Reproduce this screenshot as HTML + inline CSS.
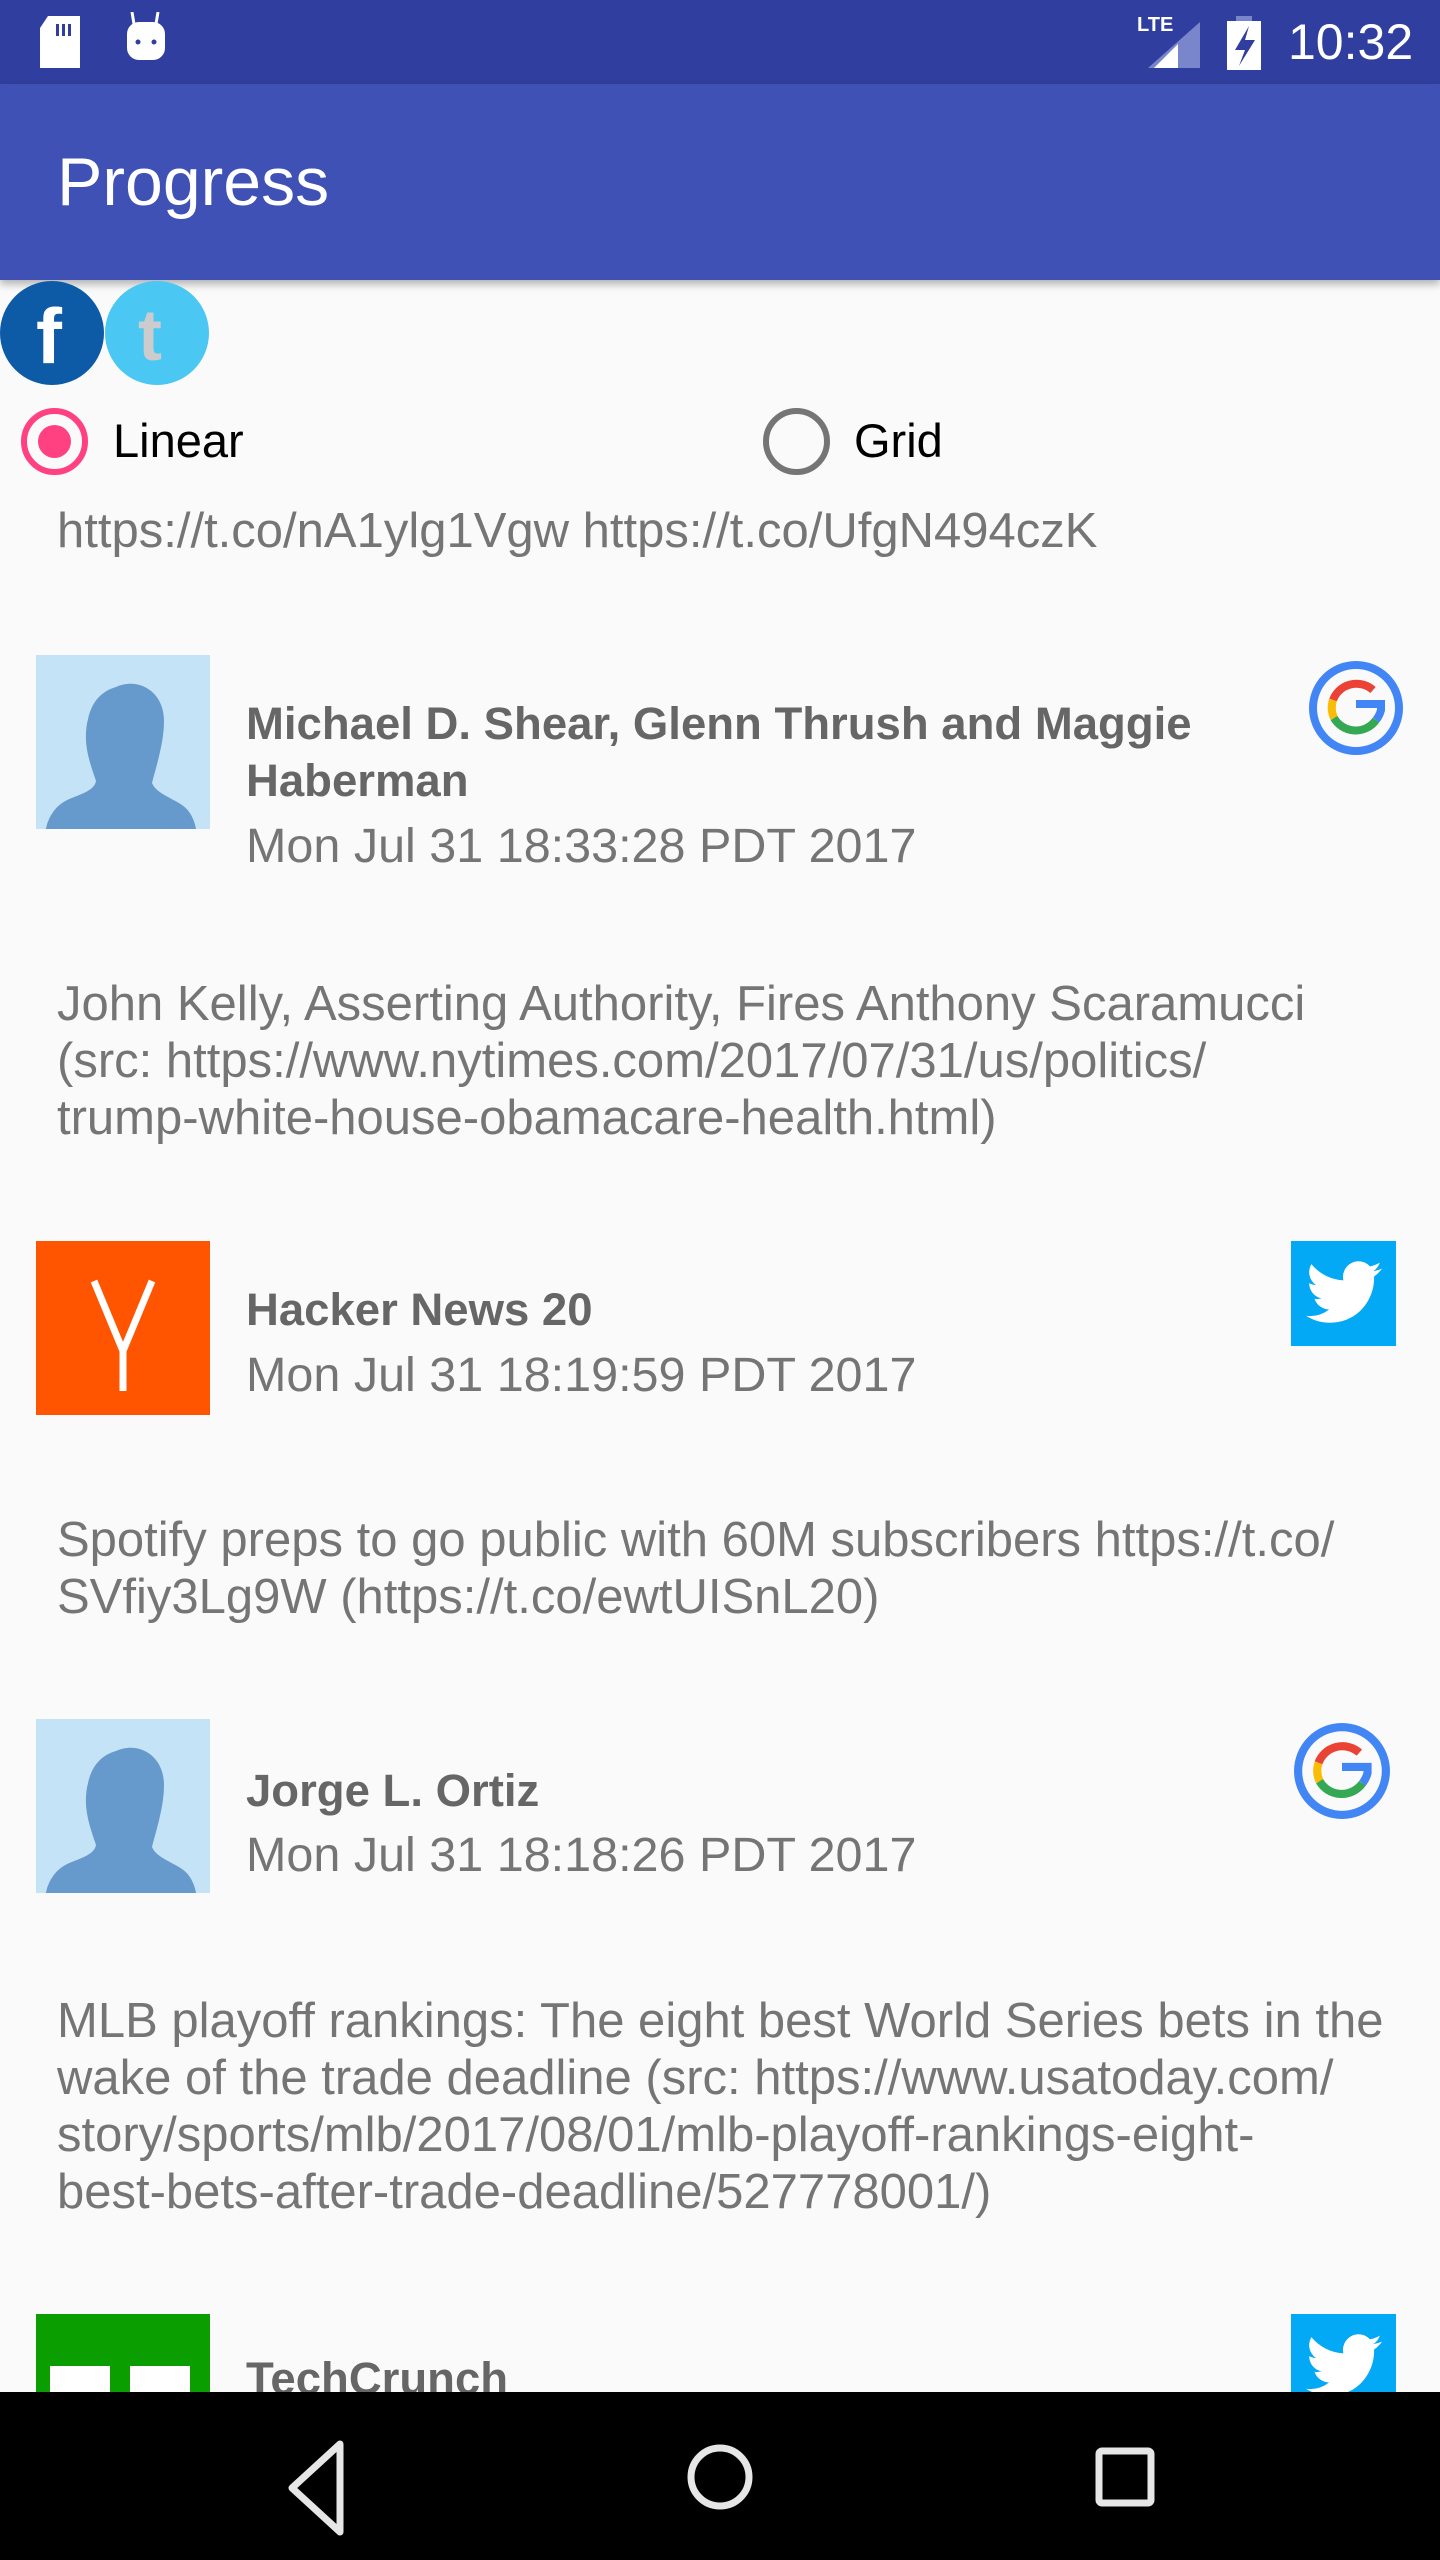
<!DOCTYPE html>
<html><head><meta charset="utf-8"><style>
*{margin:0;padding:0;box-sizing:border-box}
body{width:1440px;height:2560px;background:#fafafa;position:relative;overflow:hidden;font-family:"Liberation Sans",sans-serif}
.a{position:absolute;white-space:nowrap}
.t{font-size:49px;color:#757575;line-height:57px;left:57px}
.n{font-size:45.5px;color:#666;font-weight:bold;line-height:57px;left:246px}
.d{font-size:48.5px;color:#757575;line-height:57px;left:246px}
.av{position:absolute;left:36px;width:174px;height:174px}
.tw{position:absolute;left:1291px;width:105px;height:105px;background:#03a9f4}
</style></head><body>
<div class="a" style="left:0;top:0;width:1440px;height:84px;background:#303f9f"></div>
<div class="a" style="left:0;top:84px;width:1440px;height:196px;background:#3f51b5;box-shadow:0 4px 8px rgba(0,0,0,.3)"></div>
<svg class="a" style="left:40px;top:16px" width="45" height="52"><path d="M8 0h32v52H0V12z" fill="#fff"/><rect x="16" y="8" width="3" height="12" fill="#303f9f"/><rect x="22" y="8" width="3" height="12" fill="#303f9f"/><rect x="28" y="8" width="3" height="12" fill="#303f9f"/></svg>
<svg class="a" style="left:124px;top:12px" width="44" height="52"><line x1="8" y1="0" x2="10" y2="12" stroke="#fff" stroke-width="3"/><line x1="34" y1="0" x2="32" y2="12" stroke="#fff" stroke-width="3"/><rect x="3" y="10" width="38" height="38" rx="12" fill="#fff"/><circle cx="14" cy="30" r="2.5" fill="#303f9f"/><circle cx="30" cy="30" r="2.5" fill="#303f9f"/></svg>
<div class="a" style="left:1137px;top:14px;font-size:20px;color:#fff;font-weight:bold">LTE</div>
<svg class="a" style="left:1148px;top:22px" width="52" height="46"><path d="M52 0V46H0z" fill="#7986cb"/><path d="M30 22V46H6z" fill="#fff"/></svg>
<svg class="a" style="left:1227px;top:16px" width="34" height="54"><rect x="9" y="0" width="16" height="6" fill="#7986cb"/><rect x="0" y="5" width="34" height="49" fill="#fff"/><path d="M22 10L8 34h10l-6 16 16-26H18z" fill="#303f9f"/></svg>
<div class="a" style="left:1288px;top:12px;font-size:50px;color:#fff;line-height:60px">10:32</div>
<div class="a" style="left:57px;top:144px;font-size:68px;color:#fff;line-height:76px">Progress</div>
<div class="a" style="left:0;top:281px;width:104px;height:104px;border-radius:50%;background:#0d5aa7"></div>
<div class="a" style="left:36px;top:296px;font-size:78px;font-weight:bold;color:#fff;line-height:80px">f</div>
<div class="a" style="left:105px;top:281px;width:104px;height:104px;border-radius:50%;background:#4ac7f2"></div>
<div class="a" style="left:138px;top:300px;font-size:72px;font-weight:bold;color:#ccc;line-height:72px">t</div>
<div class="a" style="left:21px;top:408px;width:67px;height:67px;border-radius:50%;border:6px solid #ff4081"></div>
<div class="a" style="left:38px;top:425px;width:33px;height:33px;border-radius:50%;background:#ff4081"></div>
<div class="a" style="left:113px;top:412px;font-size:47px;color:#000;line-height:57px">Linear</div>
<div class="a" style="left:763px;top:408px;width:67px;height:67px;border-radius:50%;border:6px solid #757575"></div>
<div class="a" style="left:854px;top:412px;font-size:47px;color:#000;line-height:57px">Grid</div>
<div class="a t" style="top:503px">https://t.co/nA1ylg1Vgw https://t.co/UfgN494czK</div>
<svg class="av" style="top:655px" viewBox="0 0 174 174"><rect width="174" height="174" fill="#c5e3f6"/><path d="M80 32c22-10 48 4 48 34 0 22-8 46-12 62 4 10 18 14 30 22 12 8 14 24 14 24H10s2-16 16-26c12-8 32-10 34-22-6-18-14-38-8-62 4-18 14-28 28-32z" fill="#6699cc"/></svg>
<div class="a n" style="top:695px">Michael D. Shear, Glenn Thrush and Maggie</div>
<div class="a n" style="top:752px">Haberman</div>
<div class="a d" style="top:818px">Mon Jul 31 18:33:28 PDT 2017</div>
<svg class="a" style="left:1308px;top:660px" width="96" height="96" viewBox="0 0 96 96"><circle cx="48" cy="48" r="43" fill="none" stroke="#4285f4" stroke-width="8"/><path d="M65 30A25 25 0 0 0 25 40" fill="none" stroke="#ea4335" stroke-width="8"/><path d="M25 40A25 25 0 0 0 26 58" fill="none" stroke="#fbbc05" stroke-width="8"/><path d="M26 58A25 25 0 0 0 68 60" fill="none" stroke="#34a853" stroke-width="8"/><path d="M48 44h25v6a25 25 0 0 1-5 10" fill="none" stroke="#4285f4" stroke-width="8"/></svg>
<div class="a t" style="top:976px">John Kelly, Asserting Authority, Fires Anthony Scaramucci</div>
<div class="a t" style="top:1033px">(src: https://www.nytimes.com/2017/07/31/us/politics/</div>
<div class="a t" style="top:1090px">trump-white-house-obamacare-health.html)</div>
<div class="av" style="top:1241px;background:#ff5500"></div>
<svg class="a" style="left:36px;top:1241px" width="174" height="174"><path d="M58 40L87 110M116 40L87 110V150" fill="none" stroke="#fff" stroke-width="7"/></svg>
<div class="a n" style="top:1281px">Hacker News 20</div>
<div class="a d" style="top:1347px">Mon Jul 31 18:19:59 PDT 2017</div>
<div class="tw" style="top:1241px"></div>
<svg class="a" style="left:1306px;top:1260px" width="76" height="66" viewBox="0 0 24 20"><path d="M24 2.3a10 10 0 0 1-2.8.8A5 5 0 0 0 23.3.4a10 10 0 0 1-3.1 1.2A4.9 4.9 0 0 0 11.8 6 14 14 0 0 1 1.7.9a4.9 4.9 0 0 0 1.5 6.6 4.9 4.9 0 0 1-2.2-.6 4.9 4.9 0 0 0 3.9 4.8 4.9 4.9 0 0 1-2.2.1 4.9 4.9 0 0 0 4.6 3.4A9.9 9.9 0 0 1 0 17.2 14 14 0 0 0 7.5 19.4c9.1 0 14-7.5 14-14v-.6A10 10 0 0 0 24 2.3z" fill="#fff"/></svg>
<div class="a t" style="top:1512px">Spotify preps to go public with 60M subscribers https://t.co/</div>
<div class="a t" style="top:1569px">SVfiy3Lg9W (https://t.co/ewtUISnL20)</div>
<svg class="av" style="top:1719px" viewBox="0 0 174 174"><rect width="174" height="174" fill="#c5e3f6"/><path d="M80 32c22-10 48 4 48 34 0 22-8 46-12 62 4 10 18 14 30 22 12 8 14 24 14 24H10s2-16 16-26c12-8 32-10 34-22-6-18-14-38-8-62 4-18 14-28 28-32z" fill="#6699cc"/></svg>
<div class="a n" style="top:1762px">Jorge L. Ortiz</div>
<div class="a d" style="top:1827px">Mon Jul 31 18:18:26 PDT 2017</div>
<svg class="a" style="left:1293px;top:1722px" width="98" height="98" viewBox="0 0 96 96"><circle cx="48" cy="48" r="43" fill="none" stroke="#4285f4" stroke-width="8"/><path d="M65 30A25 25 0 0 0 25 40" fill="none" stroke="#ea4335" stroke-width="8"/><path d="M25 40A25 25 0 0 0 26 58" fill="none" stroke="#fbbc05" stroke-width="8"/><path d="M26 58A25 25 0 0 0 68 60" fill="none" stroke="#34a853" stroke-width="8"/><path d="M48 44h25v6a25 25 0 0 1-5 10" fill="none" stroke="#4285f4" stroke-width="8"/></svg>
<div class="a t" style="top:1993px">MLB playoff rankings: The eight best World Series bets in the</div>
<div class="a t" style="top:2050px">wake of the trade deadline (src: https://www.usatoday.com/</div>
<div class="a t" style="top:2107px">story/sports/mlb/2017/08/01/mlb-playoff-rankings-eight-</div>
<div class="a t" style="top:2164px">best-bets-after-trade-deadline/527778001/)</div>
<div class="av" style="top:2314px;background:#0a9e01"></div>
<div class="a" style="left:50px;top:2366px;width:60px;height:30px;background:#fff"></div>
<div class="a" style="left:130px;top:2366px;width:60px;height:30px;background:#fff"></div>
<div class="a n" style="top:2350px">TechCrunch</div>
<div class="tw" style="top:2314px"></div>
<svg class="a" style="left:1306px;top:2333px" width="76" height="66" viewBox="0 0 24 20"><path d="M24 2.3a10 10 0 0 1-2.8.8A5 5 0 0 0 23.3.4a10 10 0 0 1-3.1 1.2A4.9 4.9 0 0 0 11.8 6 14 14 0 0 1 1.7.9a4.9 4.9 0 0 0 1.5 6.6 4.9 4.9 0 0 1-2.2-.6 4.9 4.9 0 0 0 3.9 4.8 4.9 4.9 0 0 1-2.2.1 4.9 4.9 0 0 0 4.6 3.4A9.9 9.9 0 0 1 0 17.2 14 14 0 0 0 7.5 19.4c9.1 0 14-7.5 14-14v-.6A10 10 0 0 0 24 2.3z" fill="#fff"/></svg>
<div class="a" style="left:0;top:2392px;width:1440px;height:168px;background:#000"></div>
<svg class="a" style="left:0;top:2392px" width="1440" height="168"><path d="M340 52V140L292 96z" fill="none" stroke="#e6e6e6" stroke-width="7" stroke-linejoin="round"/><circle cx="720" cy="85" r="29" fill="none" stroke="#e6e6e6" stroke-width="7"/><rect x="1099" y="59" width="52" height="52" rx="3" fill="none" stroke="#e6e6e6" stroke-width="7"/></svg>
</body></html>
